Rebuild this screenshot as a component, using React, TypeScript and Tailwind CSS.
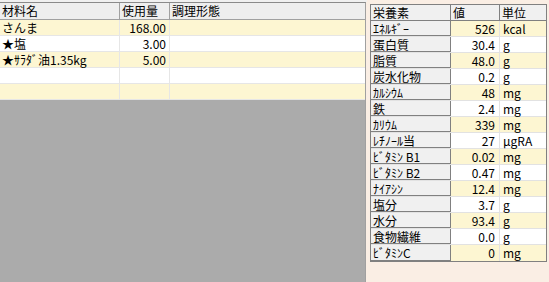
import React from "react";

const font = { fontFamily: '"Noto Sans CJK JP", "Noto Sans", sans-serif' };

const ingredients = [
  { name: "さんま", qty: "168.00" },
  { name: "★塩", qty: "3.00" },
  { name: "★ｻﾗﾀﾞ油1.35kg", qty: "5.00" },
  { name: "", qty: "" },
  { name: "", qty: "" },
];

const nutrients = [
  ["ｴﾈﾙｷﾞｰ", "526", "kcal"],
  ["蛋白質", "30.4", "g"],
  ["脂質", "48.0", "g"],
  ["炭水化物", "0.2", "g"],
  ["ｶﾙｼｳﾑ", "48", "mg"],
  ["鉄", "2.4", "mg"],
  ["ｶﾘｳﾑ", "339", "mg"],
  ["ﾚﾁﾉｰﾙ当", "27", "μgRA"],
  ["ﾋﾞﾀﾐﾝ B1", "0.02", "mg"],
  ["ﾋﾞﾀﾐﾝ B2", "0.47", "mg"],
  ["ﾅｲｱｼﾝ", "12.4", "mg"],
  ["塩分", "3.7", "g"],
  ["水分", "93.4", "g"],
  ["食物繊維", "0.0", "g"],
  ["ﾋﾞﾀﾐﾝC", "0", "mg"],
];

export default function App() {
  return (
    <div
      className="w-[549px] h-[282px] bg-[#faeee4] flex text-[12px] leading-[16px] text-black overflow-hidden"
      style={font}
    >
      {/* Left panel */}
      <div className="w-[367px] h-full flex flex-col">
        <div className="h-[2px] bg-[#f0f0f0]" />
        <div className="flex-1 flex flex-col border-t border-[#8a8a8a] border-r border-r-[#a0a0a0] mr-[1px]">
          <div className="flex h-[17px] bg-[#eeeeee] border-b border-[#a0a0a0]">
            <div className="w-[120px] pl-[2px] border-r border-[#a0a0a0]">材料名</div>
            <div className="w-[50px] pl-[2px] border-r border-[#a0a0a0]">使用量</div>
            <div className="flex-1 pl-[2px]">調理形態</div>
          </div>
          {ingredients.map((r, i) => (
            <div
              key={i}
              className={`flex h-[16px] border-b border-[#e6e6e6] ${i % 2 === 0 ? "bg-[#fdf6d2]" : "bg-white"}`}
            >
              <div className="w-[120px] pl-[2px] border-r border-[#e6e6e6] whitespace-nowrap">{r.name}</div>
              <div className="w-[50px] pr-[3px] text-right border-r border-[#e6e6e6]">{r.qty}</div>
              <div className="flex-1" />
            </div>
          ))}
          <div className="flex-1 bg-[#ababab]" />
        </div>
      </div>

      {/* Right panel */}
      <div className="pl-[3px] pt-[4px]">
        <div className="w-[177px] border border-[#808080] flex flex-col">
          <div className="flex h-[16px] bg-[#f0f0f0] border-b border-[#808080]">
            <div className="w-[80px] pl-[2px] border-r border-[#808080]">栄養素</div>
            <div className="w-[49px] pl-[2px] border-r border-[#808080]">値</div>
            <div className="flex-1 pl-[2px]">単位</div>
          </div>
          {nutrients.map((r, i) => (
            <div key={i} className={`flex h-[16px] ${i < nutrients.length - 1 ? "border-b border-[#e2e2e2]" : ""}`}>
              <div className="w-[80px] pl-[2px] bg-[#f0f0f0] border-r border-[#808080] shadow-[inset_0_-1px_0_#808080] whitespace-nowrap">
                {r[0]}
              </div>
              <div
                className={`w-[49px] pr-[4px] text-right border-r border-[#e2e2e2] ${i % 2 === 0 ? "bg-[#fdf6d2]" : "bg-white"}`}
              >
                {r[1]}
              </div>
              <div className={`flex-1 pl-[3px] ${i % 2 === 0 ? "bg-[#fdf6d2]" : "bg-white"}`}>{r[2]}</div>
            </div>
          ))}
        </div>
      </div>
    </div>
  );
}
